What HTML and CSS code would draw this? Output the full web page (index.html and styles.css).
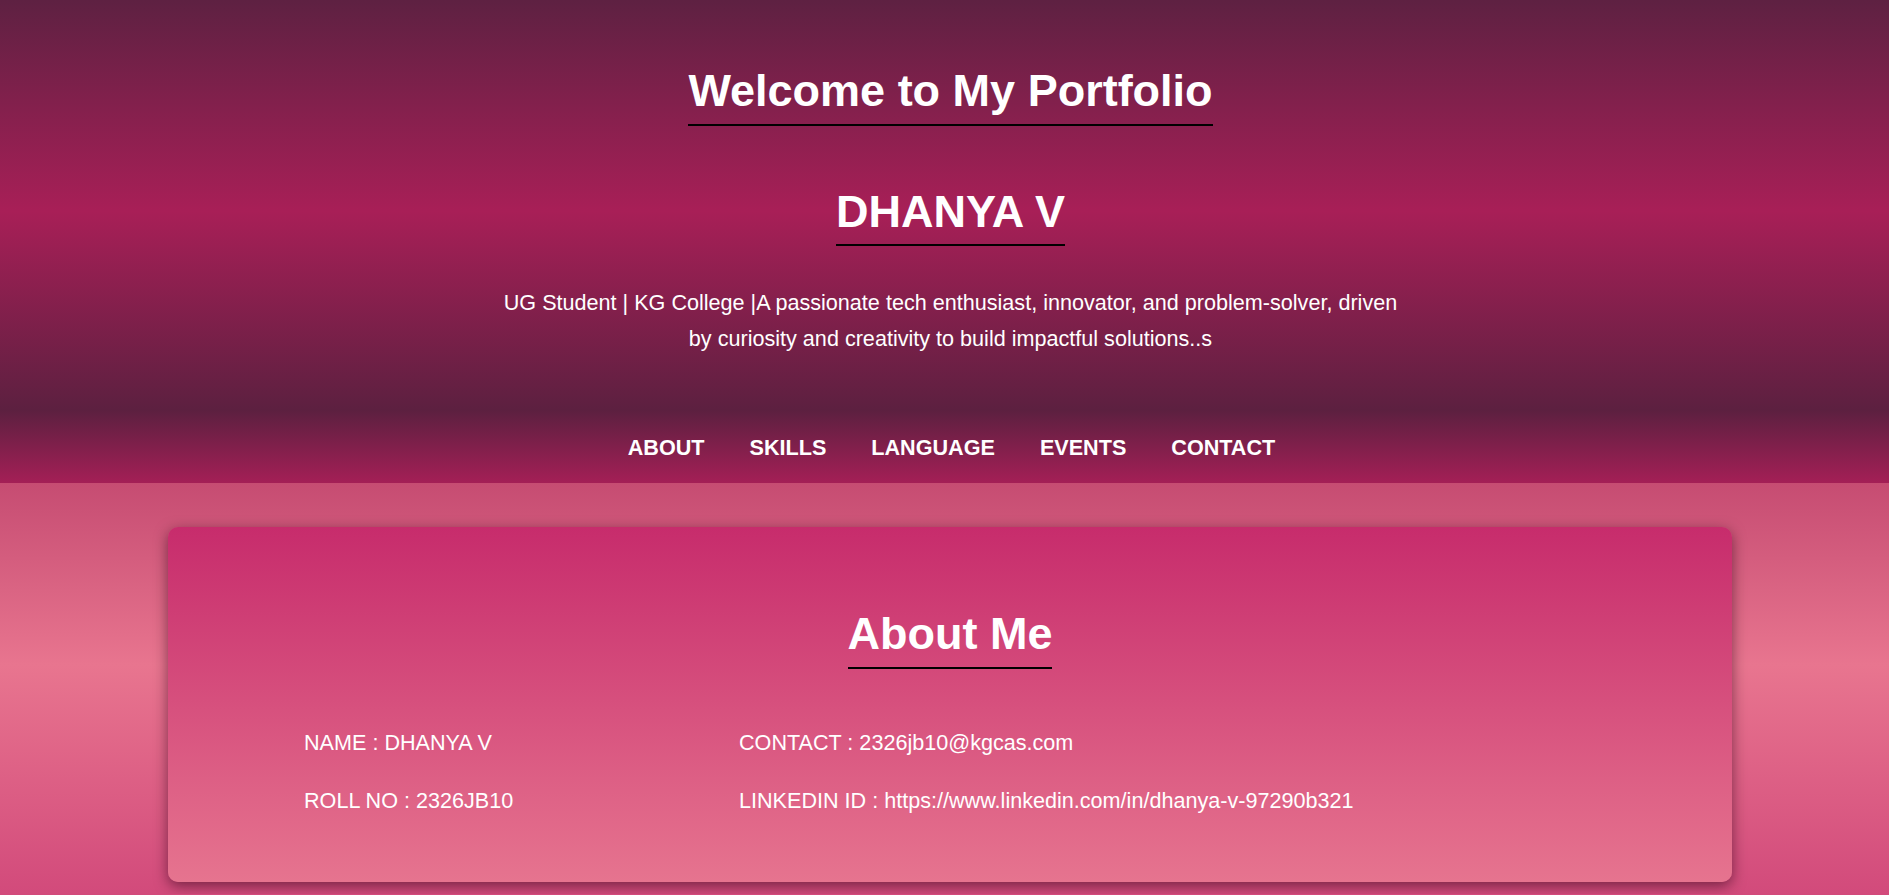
FILE: index.html
```html
<!DOCTYPE html>
<html lang="en">
<head>
<meta charset="utf-8">
<title>DHANYA V - Portfolio</title>
<link rel="stylesheet" href="styles.css">
</head>
<body>
<header class="hero">
  <h1 class="hero-title">Welcome to My Portfolio</h1>
  <h2 class="hero-name">DHANYA V</h2>
  <p class="hero-tagline">UG Student | KG College |A passionate tech enthusiast, innovator, and problem-solver, driven by curiosity and creativity to build impactful solutions..s</p>
</header>
<nav class="nav">
  <a class="nav-link" href="#about">ABOUT</a>
  <a class="nav-link" href="#skills">SKILLS</a>
  <a class="nav-link" href="#language">LANGUAGE</a>
  <a class="nav-link" href="#events">EVENTS</a>
  <a class="nav-link" href="#contact">CONTACT</a>
</nav>
<main class="main">
  <section class="card" id="about">
    <h2 class="card-title">About Me</h2>
    <div class="info">
      <div class="info-item">NAME : DHANYA V</div>
      <div class="info-item">CONTACT : 2326jb10@kgcas.com</div>
      <div class="info-item">ROLL NO : 2326JB10</div>
      <div class="info-item">LINKEDIN ID : https://www.linkedin.com/in/dhanya-v-97290b321</div>
    </div>
  </section>
</main>
</body>
</html>
```
FILE: styles.css
```css
* {
  box-sizing: border-box;
}

body {
  margin: 0;
  font-family: "Liberation Sans", Arial, sans-serif;
  color: #ffffff;
  background: #d24a7b;
}

.hero {
  display: flex;
  flex-direction: column;
  align-items: center;
  padding: 65px 0 53px 12px;
  background: linear-gradient(to bottom, #5e2142 0px, #a81f57 211px, #5c2040 411px);
}

.hero-title,
.hero-name,
.card-title {
  margin: 0;
  font-size: 45px;
  line-height: 52px;
  font-weight: bold;
  border-bottom: 2px solid #000000;
}

.hero-title {
  padding-bottom: 7px;
}

.hero-name {
  margin-top: 60px;
  padding-bottom: 6px;
}

.hero-tagline {
  margin: 39px 0 0;
  max-width: 905px;
  font-size: 21.6px;
  line-height: 36px;
  text-align: center;
}

.nav {
  display: flex;
  justify-content: center;
  gap: 45px;
  padding: 25px 0 23px 14px;
  background: linear-gradient(to bottom, #5c2040, #a41f56);
}

.nav-link {
  color: #ffffff;
  text-decoration: none;
  font-weight: bold;
  font-size: 21.6px;
  line-height: 25px;
}

.main {
  padding: 44px 0 12px;
  background: linear-gradient(to bottom, #c64c72 0px, #e8758f 182px, #d24a7b 412px);
}

.card {
  margin: 0 157px 0 168px;
  padding: 81px 0 69px;
  border-radius: 10px;
  background: linear-gradient(to bottom, #c72c6c, #e6748f);
  box-shadow: 0 4px 14px rgba(40, 0, 20, 0.55);
  display: flex;
  flex-direction: column;
}

.card-title {
  align-self: center;
  padding-bottom: 7px;
}

.info {
  display: grid;
  grid-template-columns: 435px auto;
  row-gap: 34px;
  margin-top: 62px;
  padding-left: 136px;
  font-size: 21.6px;
  line-height: 24px;
}
```
